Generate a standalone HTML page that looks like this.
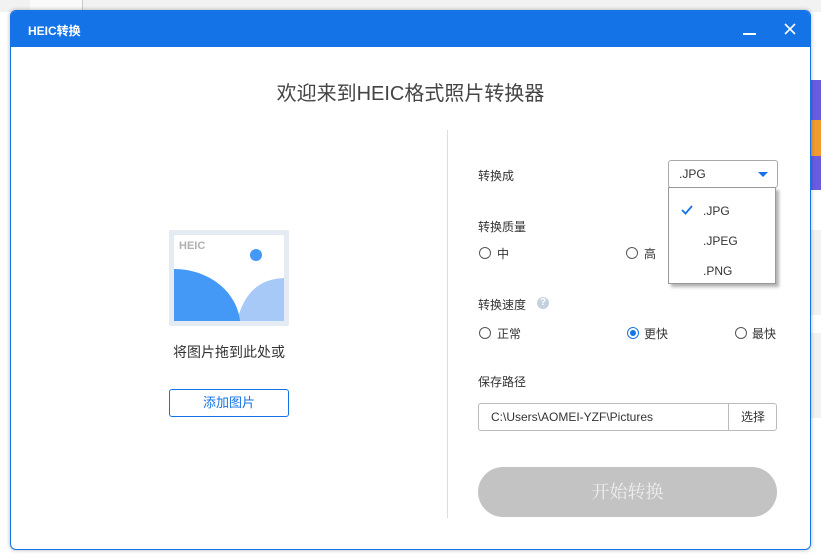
<!DOCTYPE html>
<html><head><meta charset="utf-8"><style>
*{margin:0;padding:0;box-sizing:border-box}
body{width:821px;height:560px;overflow:hidden;background:#fff;font-family:"Liberation Sans","Noto Sans CJK SC",sans-serif;position:relative;color:#333}
.abs{position:absolute}
.win{left:10px;top:10px;width:801px;height:540px;border:1px solid #1473e6;border-radius:6px;background:#fff;overflow:hidden;box-shadow:0 0 4px rgba(0,0,0,.3)}
.in{left:-1px;top:-1px;width:801px;height:540px}
.tb{left:0;top:0;width:100%;height:37px;background:#1473e6;color:#fff}
.t{font-size:12px}
.radio{width:12px;height:12px;border:1px solid #555;border-radius:50%;background:#fff}
.radio.on::after{content:"";position:absolute;left:2px;top:2px;width:6px;height:6px;border-radius:50%;background:#1473e6}
.radio.on{border-color:#1473e6}
</style></head><body>
<div class="abs" style="left:0;top:0;width:821px;height:12px;background:#f2f2f2"></div>
<div class="abs" style="left:30px;top:0;width:53px;height:12px;background:#fafafa;border-right:1px solid #ccc"></div>
<div class="abs" style="left:810px;top:80px;width:11px;height:110px;background:#6a5ce0"></div>
<div class="abs" style="left:810px;top:120px;width:11px;height:36px;background:#f09a30"></div>
<div class="abs" style="left:810px;top:230px;width:11px;height:85px;background:#f2f2f2"></div>
<div class="abs" style="left:810px;top:333px;width:11px;height:85px;background:#f2f2f2"></div>
<div class="abs win"><div class="abs in">
 <div class="abs tb">
  <div class="abs" style="left:18px;top:12px;font-size:12px;font-weight:bold">HEIC转换</div>
  <div class="abs" style="left:733px;top:23px;width:13px;height:2px;background:#fff"></div>
  <svg class="abs" style="left:774px;top:13px" width="12" height="12"><path d="M1 1L11 11M11 1L1 11" stroke="#fff" stroke-width="1.6"/></svg>
 </div>
 <div class="abs" style="left:0;width:801px;top:67px;text-align:center;font-size:20px;color:#444">欢迎来到HEIC格式照片转换器</div>
 <div class="abs" style="left:437px;top:120px;width:1px;height:388px;background:#ddd"></div>
 <div class="abs" style="left:159px;top:220px;width:120px;height:96px;background:#e4ebf2;border-radius:2px">
  <svg class="abs" style="left:5px;top:5px" width="110" height="86">
   <rect width="110" height="86" fill="#fff" rx="2"/>
   <path d="M110 86V43C85 44 70 58 63 86Z" fill="#a6c9f7"/>
   <path d="M0 34C35 34 63 57 66 86H0Z" fill="#4599f6"/>
   <circle cx="82" cy="20" r="6" fill="#4599f6"/>
   <text x="5" y="14" font-family="Liberation Sans" font-weight="bold" font-size="11" fill="#b0b0b0">HEIC</text>
  </svg>
 </div>
 <div class="abs" style="left:159px;top:332px;width:120px;text-align:center;font-size:14px">将图片拖到此处或</div>
 <div class="abs" style="left:159px;top:379px;width:120px;height:28px;border:1px solid #1473e6;border-radius:3px;color:#1473e6;text-align:center;line-height:26px;font-size:13px">添加图片</div>
 <div class="abs t" style="left:468px;top:157px">转换成</div>
 <div class="abs" style="left:658px;top:150px;width:110px;height:28px;border:1px solid #aaa;border-radius:3px;font-size:12px;line-height:26px;padding-left:10px">.JPG
  <div class="abs" style="right:9px;top:11px;width:0;height:0;border-left:5px solid transparent;border-right:5px solid transparent;border-top:5px solid #1473e6"></div></div>
 <div class="abs t" style="left:468px;top:208px">转换质量</div>
 <div class="abs radio" style="left:469px;top:237px"></div><div class="abs t" style="left:487px;top:235px">中</div>
 <div class="abs radio" style="left:616px;top:237px"></div><div class="abs t" style="left:634px;top:235px">高</div>
 <div class="abs t" style="left:468px;top:286px">转换速度</div>
 <div class="abs" style="left:527px;top:287px;width:12px;height:12px;border-radius:50%;background:#c5d0de;color:#fff;font-size:10px;font-weight:bold;text-align:center;line-height:12px">?</div>
 <div class="abs radio" style="left:469px;top:317px"></div><div class="abs t" style="left:487px;top:315px">正常</div>
 <div class="abs radio on" style="left:617px;top:317px"></div><div class="abs t" style="left:634px;top:315px">更快</div>
 <div class="abs radio" style="left:725px;top:317px"></div><div class="abs t" style="left:742px;top:315px">最快</div>
 <div class="abs t" style="left:468px;top:363px">保存路径</div>
 <div class="abs" style="left:468px;top:393px;width:299px;height:28px;border:1px solid #bbb;border-radius:3px;font-size:12px;line-height:26px;padding-left:12px">C:\Users\AOMEI-YZF\Pictures
  <div class="abs" style="left:249px;top:0;width:1px;height:26px;background:#bbb"></div>
  <div class="abs" style="left:250px;top:0;width:48px;text-align:center">选择</div></div>
 <div class="abs" style="left:468px;top:457px;width:299px;height:50px;border-radius:25px;background:#c3c3c3;color:#eee;text-align:center;line-height:50px;font-size:18px;font-family:'Liberation Serif','Noto Serif CJK SC',serif">开始转换</div>
 <div class="abs" style="left:658px;top:177px;width:108px;height:97px;border:1px solid #999;background:#fff;box-shadow:3px 3px 3px rgba(0,0,0,.3);font-size:12px">
  <svg class="abs" style="left:12px;top:17px" width="12" height="10"><path d="M1 5L4.5 8.5L11 1" stroke="#1473e6" stroke-width="1.8" fill="none"/></svg>
  <div class="abs" style="left:34px;top:16px">.JPG</div>
  <div class="abs" style="left:34px;top:46px">.JPEG</div>
  <div class="abs" style="left:34px;top:76px">.PNG</div>
 </div>
</div></div>
</body></html>
